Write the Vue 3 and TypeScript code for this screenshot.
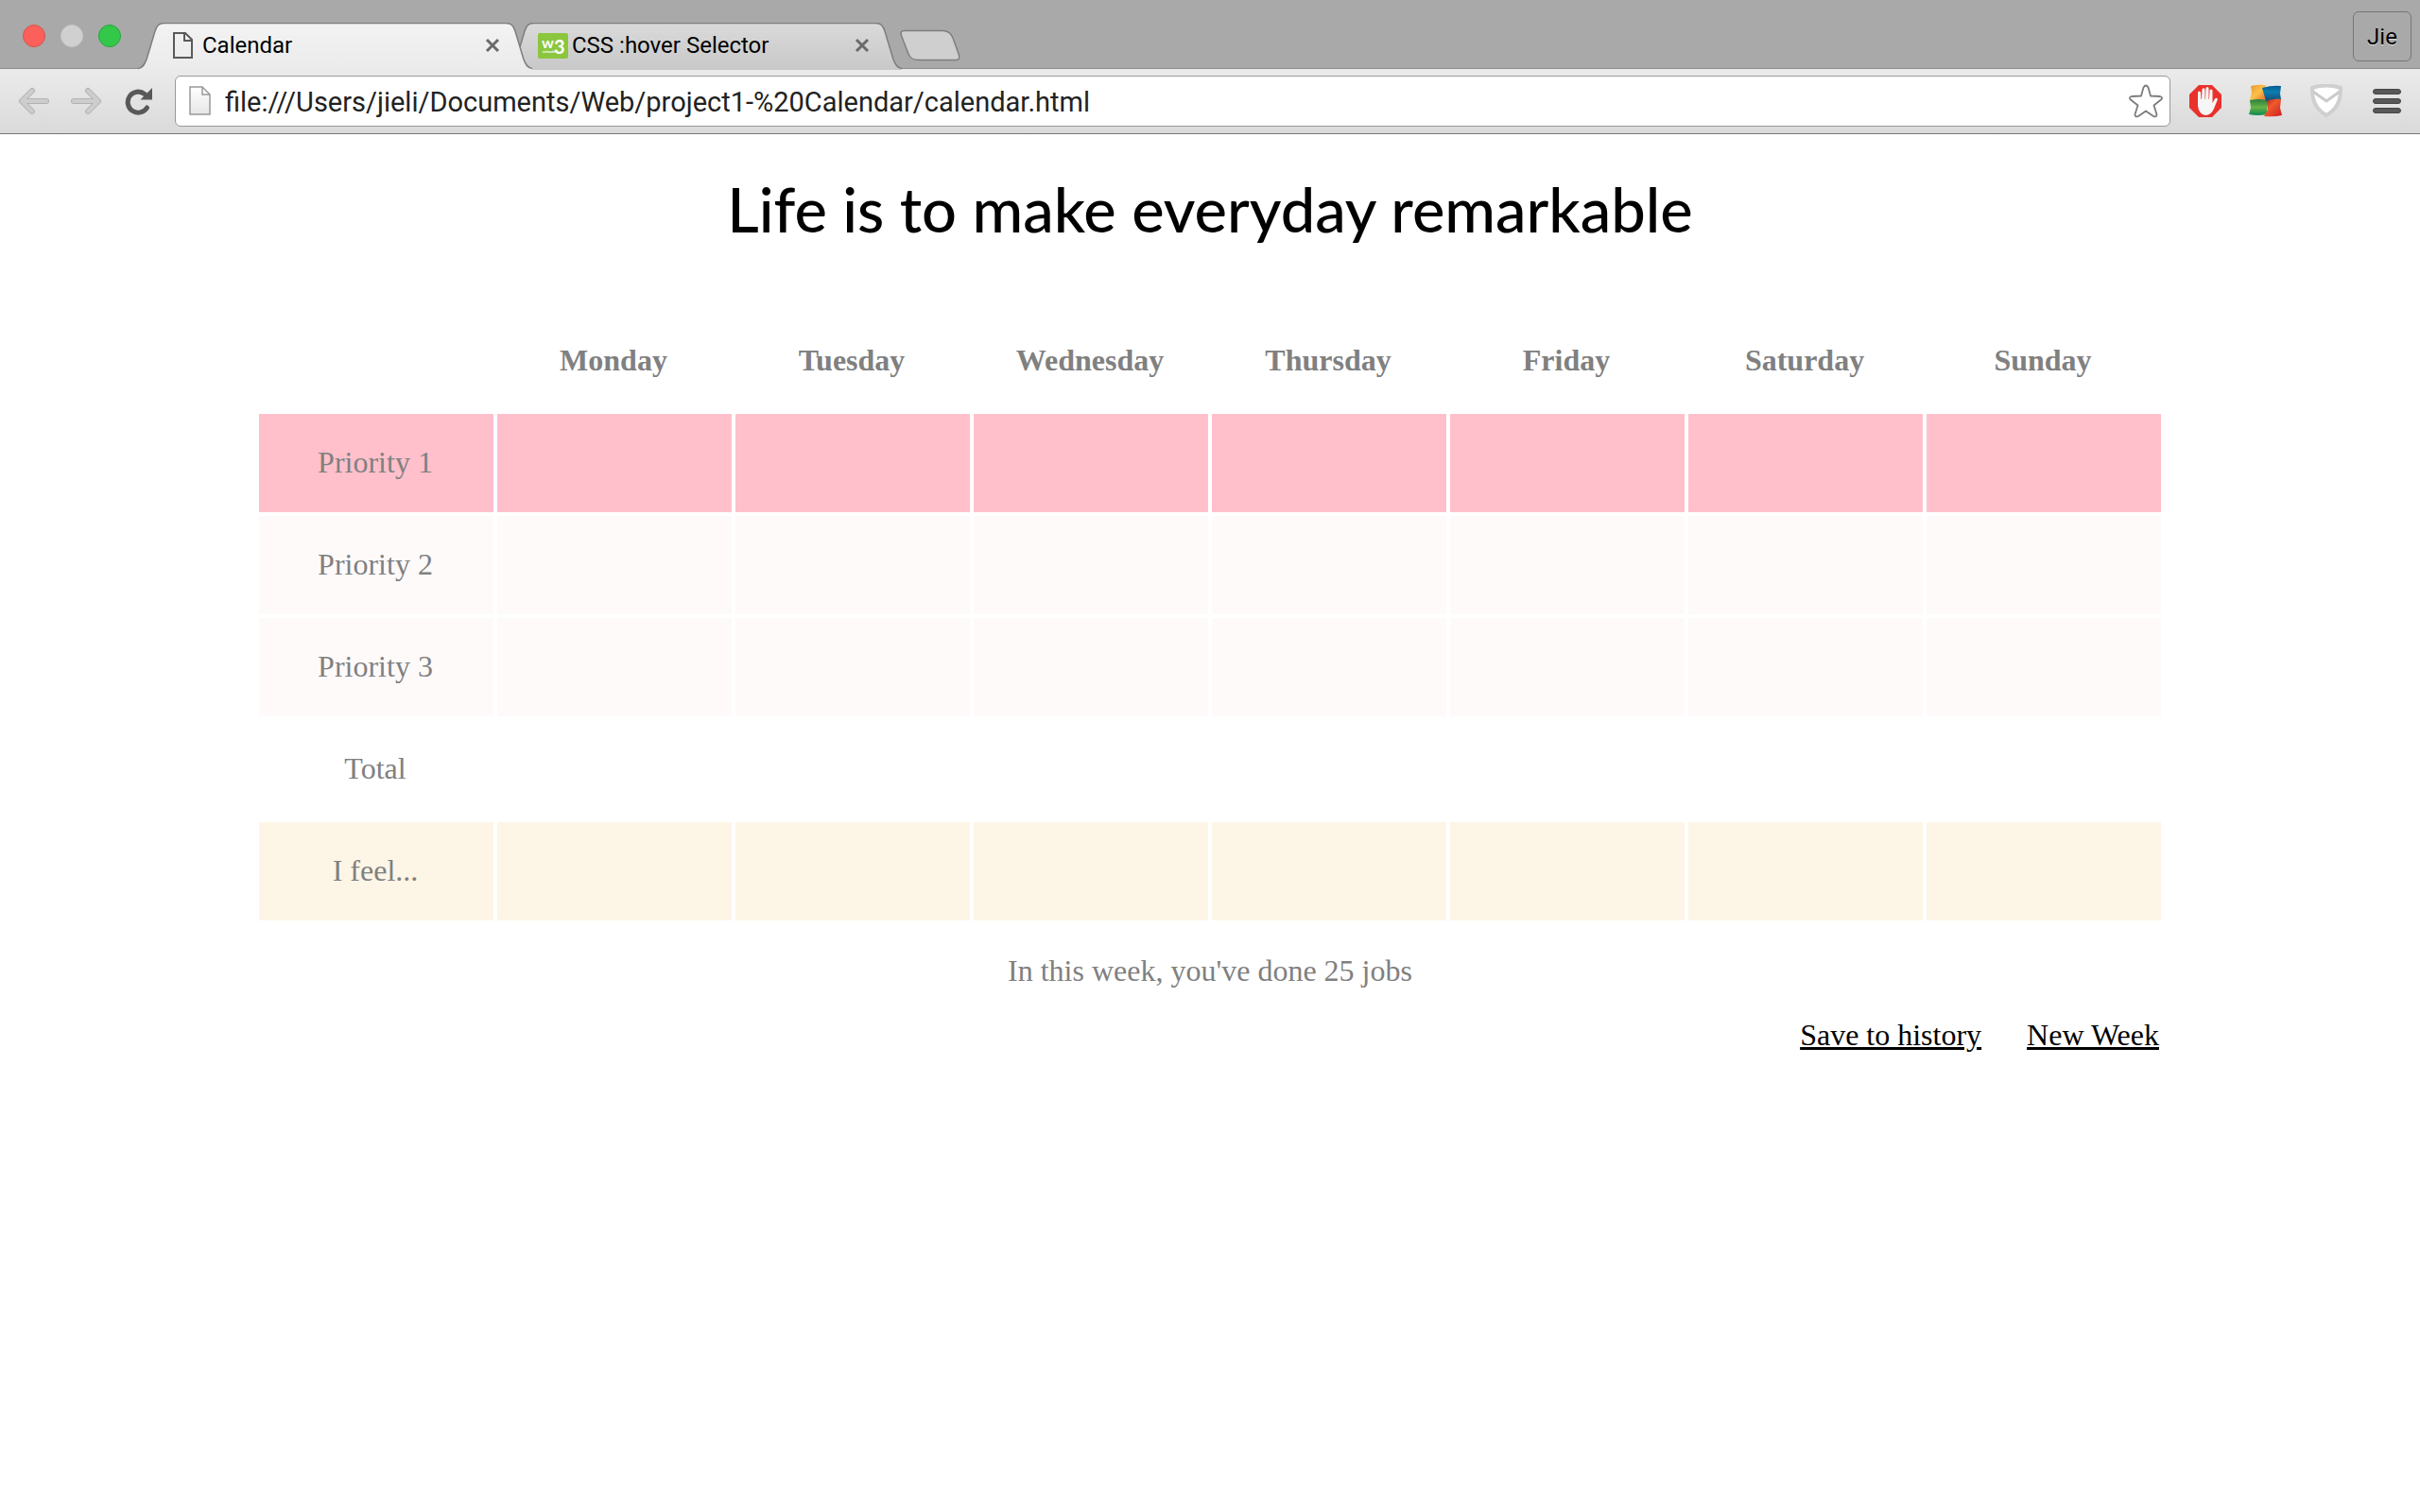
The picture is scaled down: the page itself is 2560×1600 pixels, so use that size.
<script setup lang="ts">
import { ref } from 'vue'

interface Tab {
  title: string
  kind: 'page' | 'w3'
}

interface Row {
  label: string
  tone: string
}

const tabs: Tab[] = [
  { title: 'Calendar', kind: 'page' },
  { title: 'CSS :hover Selector', kind: 'w3' },
]
const activeTab = ref(0)
const address = ref('file:///Users/jieli/Documents/Web/project1-%20Calendar/calendar.html')

const days: string[] = ['Monday', 'Tuesday', 'Wednesday', 'Thursday', 'Friday', 'Saturday', 'Sunday']
const rows: Row[] = [
  { label: 'Priority 1', tone: 'pink' },
  { label: 'Priority 2', tone: 'snow' },
  { label: 'Priority 3', tone: 'snow' },
  { label: 'Total', tone: 'plain' },
  { label: 'I feel...', tone: 'cream' },
]
const jobsDone = ref(25)
</script>

<template>
  <div class="browser">
    <header class="chrome">
      <div class="tab-bar">
        <div class="lights">
          <button class="light red" aria-label="Close window"></button>
          <button class="light idle" aria-label="Minimize window"></button>
          <button class="light green" aria-label="Zoom window"></button>
        </div>
        <div class="tabs">
          <div v-for="(tab, i) in tabs" :key="tab.title" class="tab" :class="{ active: i === activeTab }">
            <svg class="tab-shape" viewBox="0 0 417 50" aria-hidden="true">
              <defs>
                <linearGradient :id="'tab-fill-' + i" x1="0" y1="0" x2="0" y2="1">
                  <stop offset="0" :stop-color="i === activeTab ? '#f3f3f3' : '#dadada'" />
                  <stop offset="1" :stop-color="i === activeTab ? '#ebebeb' : '#c8c8c8'" />
                </linearGradient>
              </defs>
              <path
                :fill="`url(#tab-fill-${i})`"
                d="M0 50V48.500C5 48 7 44 9 39L18 9C20 3 22 .5 28 .5H389C395 .5 397 3 399 9L408 39C410 44 412 48 417 48.500V50Z"
              />
              <path
                class="tab-edge"
                d="M0 48.500C5 48 7 44 9 39L18 9C20 3 22 .5 28 .5H389C395 .5 397 3 399 9L408 39C410 44 412 48 417 48.500"
              />
            </svg>
            <button class="tab-main" @click="activeTab = i">
              <svg v-if="tab.kind === 'page'" width="32" height="28" viewBox="0 0 32 28" aria-hidden="true">
                <path d="M6 1H18L25 8V27H6Z M17 1V9H25" fill="none" stroke="#5a5a5a" stroke-width="2" />
              </svg>
              <svg v-else class="w3-logo" width="32" height="28" viewBox="0 0 32 28" aria-hidden="true">
                <rect y="1" width="32" height="27" rx="2" fill="#8bc63e" />
                <text x="4" y="17" class="w-mark">w</text>
                <text x="17" y="23" class="three-mark">3</text>
                <text x="5" y="22" class="schools-mark">schools</text>
              </svg>
              <span>{{ tab.title }}</span>
            </button>
            <button class="tab-close" :aria-label="'Close ' + tab.title">
              <svg width="16" height="16" viewBox="0 0 16 16">
                <path d="M2 2L14 14M14 2L2 14" stroke="#6a6a6a" stroke-width="3" />
              </svg>
            </button>
          </div>
        </div>
        <button class="new-tab" aria-label="New tab">
          <svg width="64" height="34" viewBox="0 0 64 34">
            <path
              d="M5 1.500H45C51 1.500 54 4 56 9L62 26C63.500 30 63 32.500 59 32.500H20C14 32.500 11 31 9 26L2 8C0 3 1 1.500 5 1.500Z"
              fill="#cfcfcf"
              stroke="#7e7e7e"
              stroke-width="1.500"
            />
          </svg>
        </button>
        <button class="profile">Jie</button>
      </div>

      <div class="toolbar">
        <button class="icon" aria-label="Back">
          <svg width="32" height="30" viewBox="0 0 32 30">
            <path d="M29 15H4M14 4L3 15L14 26" fill="none" stroke="#b2b2b2" stroke-width="6" stroke-linecap="round" stroke-linejoin="round" />
            <path d="M29 15H4M14 4L3 15L14 26" fill="none" stroke="#cdcdcd" stroke-width="4" stroke-linecap="round" stroke-linejoin="round" />
          </svg>
        </button>
        <button class="icon" aria-label="Forward">
          <svg width="32" height="30" viewBox="0 0 32 30">
            <path d="M3 15H28M18 4L29 15L18 26" fill="none" stroke="#b2b2b2" stroke-width="6" stroke-linecap="round" stroke-linejoin="round" />
            <path d="M3 15H28M18 4L29 15L18 26" fill="none" stroke="#cdcdcd" stroke-width="4" stroke-linecap="round" stroke-linejoin="round" />
          </svg>
        </button>
        <button class="icon" aria-label="Reload">
          <svg width="32" height="30" viewBox="0 0 32 30">
            <path d="M25.500 22A11 11 0 1 1 23 7.500" fill="none" stroke="#585858" stroke-width="5" stroke-linecap="round" />
            <path d="M31 1V13.500H18.500Z" fill="#585858" />
          </svg>
        </button>
        <div class="omnibox">
          <svg width="24" height="32" viewBox="0 0 24 32" aria-hidden="true">
            <defs>
              <linearGradient id="sheet" x1="0" y1="0" x2="0" y2="1">
                <stop offset="0" stop-color="#ffffff" />
                <stop offset="1" stop-color="#e6e6e6" />
              </linearGradient>
            </defs>
            <path d="M1 1H14L22 9V30H1Z M14 1V9H22" fill="url(#sheet)" stroke="#999" stroke-width="1.500" />
          </svg>
          <input v-model="address" type="text" aria-label="Address" spellcheck="false" />
          <button class="icon" aria-label="Bookmark this page">
            <svg width="36" height="36" viewBox="0 0 36 36">
              <path
                d="M15.500 3.500Q18 -.5 20.500 3.500L23 12.500L33 13Q36.500 14 34 16.500L26.500 22.500L29.500 32Q29.500 35.500 26 34L18 28.500L10 34Q6.500 35.500 6.500 32L9.500 22.500L2 16.500Q-.5 14 3 13L13 12.500Z"
                fill="#fff"
                stroke="#7c7c7c"
                stroke-width="1.800"
                stroke-linejoin="round"
              />
            </svg>
          </button>
        </div>
        <div class="extensions">
          <button class="icon" aria-label="Ad blocker">
            <svg width="36" height="36" viewBox="0 0 36 36">
              <path d="M11 1H25L35 11V25L25 35H11L1 25V11Z" fill="#e8322b" />
              <path
                d="M10 8.500Q11.500 6.500 13 8.500L13.500 16H14L14.500 5.500Q16 3 17.500 5.500V16H18L18.500 4Q20 2 21.500 4V16H22L22.500 6.500Q24 4.500 25.500 6.500V20L28 15.500Q30 14 31 16L27 26Q24 33 18 33Q11 32 10 23Z"
                fill="#f6f6f6"
              />
            </svg>
          </button>
          <button class="icon" aria-label="Web safety">
            <svg width="36" height="36" viewBox="0 0 36 36">
              <defs>
                <linearGradient id="avg-y" x1="0" y1="0" x2="1" y2="1"><stop offset="0" stop-color="#e8962f" /><stop offset=".5" stop-color="#fcc14a" /><stop offset="1" stop-color="#e8622a" /></linearGradient>
                <linearGradient id="avg-b" x1="0" y1="0" x2="0" y2="1"><stop offset="0" stop-color="#05588f" /><stop offset=".4" stop-color="#0b7fb2" /><stop offset="1" stop-color="#15486f" /></linearGradient>
                <linearGradient id="avg-g" x1="0" y1="0" x2="0" y2="1"><stop offset="0" stop-color="#2b7d3c" /><stop offset=".5" stop-color="#67b345" /><stop offset="1" stop-color="#0e8a50" /></linearGradient>
                <linearGradient id="avg-r" x1="0" y1="0" x2="1" y2="1"><stop offset="0" stop-color="#a81a20" /><stop offset=".4" stop-color="#ef5a2d" /><stop offset="1" stop-color="#cf1d23" /></linearGradient>
              </defs>
              <path d="M2 2Q10 0 18 1L17 10L19 17Q10 15 1 17L3 9Z" fill="url(#avg-y)" />
              <path d="M1 17Q10 15 20 17L19 32Q9 34 0 32L2 25Z" fill="url(#avg-g)" />
              <path d="M19 17Q27 15 34 16L33 25L35 33Q27 35 16 34L20 27Z" fill="url(#avg-r)" />
              <path d="M14 4Q25 1 34 2L33 10L34 16Q26 15 18 18Z" fill="url(#avg-b)" />
            </svg>
          </button>
          <button class="icon" aria-label="Shield">
            <svg width="36" height="36" viewBox="0 0 36 36">
              <path d="M3 4Q18 -1 33 4Q34 24 18 33Q2 24 3 4Z" fill="#fff" stroke="#cfcfcf" stroke-width="4" />
              <path d="M4 8L18 18L32 8" fill="none" stroke="#cacaca" stroke-width="3" />
            </svg>
          </button>
          <button class="icon" aria-label="Menu">
            <svg width="36" height="36" viewBox="0 0 36 36">
              <g fill="#585858" stroke="#454545" stroke-width="1">
                <rect x="3.500" y="5.500" width="29" height="5" rx="2.500" />
                <rect x="3.500" y="15.500" width="29" height="5" rx="2.500" />
                <rect x="3.500" y="25.500" width="29" height="5" rx="2.500" />
              </g>
            </svg>
          </button>
        </div>
      </div>
    </header>

    <main class="page">
      <h1>Life is to make everyday remarkable</h1>
      <table>
        <thead>
          <tr>
            <td></td>
            <th v-for="day in days" :key="day" scope="col">{{ day }}</th>
          </tr>
        </thead>
        <tbody>
          <tr v-for="row in rows" :key="row.label" :class="row.tone">
            <th scope="row">{{ row.label }}</th>
            <td v-for="day in days" :key="day"></td>
          </tr>
        </tbody>
      </table>
      <p class="summary">In this week, you've done {{ jobsDone }} jobs</p>
      <nav class="actions">
        <a href="#history">Save to history</a>
        <a href="#new">New Week</a>
      </nav>
    </main>
  </div>
</template>

<style>
body {
  background: #fff;
}
</style>

<style scoped>
.browser {
  min-height: 100vh;
  background: #fff;
}

button {
  margin: 0;
  padding: 0;
  border: 0;
  background: none;
  color: inherit;
  font: inherit;
}

svg {
  display: block;
  flex: none;
}

.chrome {
  font-family: Roboto, "Liberation Sans", sans-serif;
  font-size: 24px;
  color: #000;
}

.tab-bar {
  display: flex;
  height: 72px;
  background: #a9a9a9;
}

.lights {
  display: flex;
  gap: 16px;
  width: 122px;
  padding: 26px 0 0 24px;
}

.light {
  width: 24px;
  height: 24px;
  border: 1px solid #d9524c;
  border-radius: 50%;
  background: #fc605b;
}

.light.idle {
  border-color: #c6c6c6;
  background: #d0d0d0;
}

.light.green {
  border-color: #29a53b;
  background: #34c84a;
}

.tabs {
  display: flex;
  padding-top: 24px;
}

.tab {
  position: relative;
  display: flex;
  align-items: center;
  width: 417px;
  height: 48px;
}

.tab + .tab {
  margin-left: -26px;
}

.tab.active {
  z-index: 1;
}

.tab-shape {
  position: absolute;
  top: 0;
  left: 0;
  width: 417px;
  height: 50px;
}

.tab-edge {
  fill: none;
  stroke: #7e7e7e;
  stroke-width: 1.5;
}

.tab-main {
  position: relative;
  display: flex;
  flex: 1;
  align-items: center;
  gap: 4px;
  padding-left: 32px;
  line-height: 32px;
}

.tab-close {
  position: relative;
  margin-right: 34px;
}

.w3-logo {
  overflow: visible;
  fill: #fff;
  font-family: Lato, sans-serif;
  font-weight: 700;
}

.w-mark {
  font-size: 16px;
}

.three-mark {
  font-size: 20px;
}

.schools-mark {
  font-size: 4px;
}

.new-tab {
  align-self: flex-start;
  margin: 31px auto 0 -2px;
}

.profile {
  width: 62px;
  height: 53px;
  margin: 12px 9px 0 0;
  border: 1px solid #767676;
  border-radius: 6px;
  text-shadow: 0 1px 0 #ddd;
}

.toolbar {
  display: flex;
  align-items: center;
  box-sizing: border-box;
  height: 70px;
  padding: 0 17px 0 20px;
  border-top: 1px solid #8c8c8c;
  border-bottom: 1px solid #767676;
  background: linear-gradient(#ebebeb, #dadada);
}

.toolbar > .icon {
  margin-right: 23px;
}

.omnibox {
  display: flex;
  flex: 1;
  align-items: center;
  box-sizing: border-box;
  height: 54px;
  padding: 0 7px 0 14px;
  border: 1px solid #999;
  border-radius: 6px;
  background: #fff;
}

.omnibox input {
  flex: 1;
  min-width: 0;
  margin-left: 14px;
  padding: 2px 0 0;
  border: 0;
  outline: 0;
  background: none;
  color: #222;
  font-family: inherit;
  font-size: 29px;
  line-height: 40px;
}

.extensions {
  display: flex;
  gap: 28px;
  margin-left: 19px;
}

.page {
  padding: 0 270px;
  color: #808080;
  font-family: "Liberation Serif", "Times New Roman", serif;
  font-size: 32px;
  line-height: 36px;
}

h1 {
  margin: 0;
  padding: 31px 0 57px;
  color: #000;
  font-family: Papyrus, Lato, sans-serif;
  font-size: 65px;
  font-weight: 500;
  line-height: 96px;
  text-align: center;
}

table {
  width: 100%;
  table-layout: fixed;
  border-spacing: 4px;
}

th,
td {
  height: 102px;
  padding: 0 2px 2px 0;
  text-align: center;
}

tbody th {
  font-weight: 400;
}

.pink > * {
  background: #ffc0cb;
}

.snow > * {
  background: #fffafa;
}

.cream > * {
  background: #fdf5e6;
}

.summary {
  margin: 31px 0 32px;
  text-align: center;
}

.actions {
  display: flex;
  justify-content: flex-end;
  gap: 48px;
  padding-right: 6px;
}

.actions a {
  color: #000;
  text-decoration: underline;
}
</style>
